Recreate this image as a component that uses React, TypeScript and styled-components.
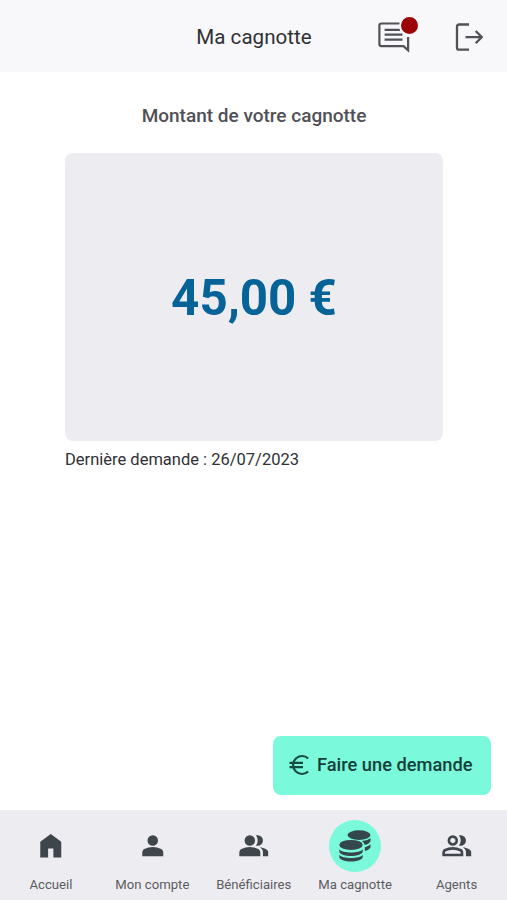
import React from "react";
import styled, { createGlobalStyle } from "styled-components";

const PERSON =
  "M12 12q-1.65 0-2.825-1.175T8 8t1.175-2.825T12 4t2.825 1.175T16 8t-1.175 2.825T12 12m-8 8v-2.8q0-.85.438-1.562T5.6 14.55q1.55-.775 3.15-1.162T12 13t3.25.388 3.15 1.162q.725.375 1.163 1.088T20 17.2V20z";
const GROUP =
  "M1 20v-2.8q0-.85.438-1.562T2.6 14.55q1.55-.775 3.15-1.162T9 13t3.25.388 3.15 1.162q.725.375 1.163 1.088T17 17.2V20zm18 0v-3q0-1.1-.612-2.113T16.65 13.15q1.275.15 2.4.513t2.1.887q.9.5 1.375 1.112T23 17v3zM9 12q-1.65 0-2.825-1.175T5 8t1.175-2.825T9 4t2.825 1.175T13 8t-1.175 2.825T9 12m10-4q0 1.65-1.175 2.825T15 12q-.275 0-.7-.062T13.6 11.8q.675-.8 1.038-1.775T15 8t-.362-2.025T13.6 4.2q.35-.125.7-.163T15 4q1.65 0 2.825 1.175T19 8";
const GROUP_HOLES =
  "M3 18h12v-.8q0-.275-.137-.5t-.363-.35q-1.35-.675-2.725-1.012T9 15t-2.775.338T3.5 16.35q-.225.125-.363.35T3 17.2zm6-8q.825 0 1.413-.587T11 8t-.587-1.412T9 6t-1.412.588T7 8t.588 1.413T9 10";

const Coins = () => (
  <svg width="52" height="52" viewBox="0 0 52 52" fill="#34474c">
    <ellipse cx="30" cy="15.100" rx="11.500" ry="4.800" />
    <path d="M33 20.900Q39 20.400 41.500 18V21.400Q40 24 35.800 25Q35 22.500 33 20.900Z" />
    <path d="M35.800 27.200Q39.800 26.200 41.500 24.200V27.400Q40 30 35.800 31Z" />
    <ellipse cx="22" cy="24.900" rx="11.700" ry="5" />
    <path d="M10.300 29.200C13 33.600 31 33.600 33.700 29.200V32C31 37.400 13 37.400 10.300 32Z" />
    <path d="M10.300 34.700C13 39.100 31 39.100 33.700 34.700V37.500C31 42.900 13 42.900 10.300 37.500Z" />
  </svg>
);

const items = [
  { label: "Accueil", path: "M4 21V9l8-6 8 6v12h-6v-7h-4v7z" },
  { label: "Mon compte", path: PERSON },
  { label: "Bénéficiaires", path: GROUP },
  { label: "Ma cagnotte", active: true },
  { label: "Agents", path: GROUP + "z" + GROUP_HOLES },
];

export default function App() {
  return (
    <Page>
      <GlobalStyle />
      <Header>
        <span />
        <Title>Ma cagnotte</Title>
        <Actions>
          <Messages>
            <svg width="34" height="34" viewBox="0 0 34 34" fill="none" stroke="#505257" strokeWidth="2.200">
              <path d="M24 3.500H5.500Q3.400 3.500 3.400 5.600V24Q3.400 26.100 5.500 26.100H27.500L32.100 30.300V17" />
              <path d="M8.600 9.900H24M8.600 14.700H26.500M8.600 19.700H26.500" />
            </svg>
            <Dot />
          </Messages>
          <svg width="28" height="28" viewBox="0 0 28 28" fill="none" stroke="#505257" strokeWidth="2.300">
            <path d="M14 1.500H4Q2 1.500 2 3.500V24.700Q2 26.700 4 26.700H14" />
            <path d="M10.500 14.100H27M20.700 8L26.800 14.100L20.700 20.200" />
          </svg>
        </Actions>
      </Header>
      <Main>
        <Heading>Montant de votre cagnotte</Heading>
        <Card>
          <Amount>45,00 €</Amount>
        </Card>
        <LastRequest>Dernière demande : 26/07/2023</LastRequest>
      </Main>
      <Footer>
        <RequestButton>
          <svg width="21" height="22" viewBox="0 0 21 22" fill="none" stroke="#174b43" strokeWidth="2.100">
            <path d="M19.200 4.400A9 9 0 1 0 19.200 17.600M.5 8.900H14M.5 13.100H14" />
          </svg>
          <ButtonText>Faire une demande</ButtonText>
        </RequestButton>
      </Footer>
      <Nav>
        {items.map((item) => (
          <NavItem key={item.label}>
            <NavIcon $active={item.active}>
              {item.path ? (
                <svg width="31.500" height="31.500" viewBox="0 0 24 24" fill="#3e464c" fillRule="evenodd">
                  <path d={item.path} />
                </svg>
              ) : (
                <Coins />
              )}
            </NavIcon>
            <NavLabel>{item.label}</NavLabel>
          </NavItem>
        ))}
      </Nav>
    </Page>
  );
}

const GlobalStyle = createGlobalStyle`
  * {
    box-sizing: border-box;
  }
  body {
    margin: 0;
    background: #fff;
    font-family: Roboto, sans-serif;
  }
  svg {
    display: block;
    flex-shrink: 0;
  }
`;

const Page = styled.div`
  width: 100%;
  height: 900px;
  display: flex;
  flex-direction: column;
  overflow: hidden;
`;

const Header = styled.header`
  height: 72px;
  flex-shrink: 0;
  display: grid;
  grid-template-columns: 1fr auto 1fr;
  align-items: center;
  background: #f8f8fb;
`;

const Title = styled.h1`
  margin: 0;
  padding: 2px 0 0 1px;
  font-size: 20.6px;
  line-height: 28px;
  font-weight: 400;
  color: #303034;
`;

const Actions = styled.div`
  display: flex;
  align-items: center;
  justify-content: flex-end;
  gap: 45px;
  padding: 2px 24px 0 0;
`;

const Messages = styled.div`
  position: relative;
`;

const Dot = styled.span`
  position: absolute;
  top: -5px;
  right: -10px;
  width: 21px;
  height: 21px;
  border: 2px solid #f8f8fb;
  border-radius: 50%;
  background: #9c0306;
`;

const Main = styled.main`
  flex: 1;
  padding: 30px 64px 0 65px;
`;

const Heading = styled.h2`
  margin: 0 0 23px;
  font-size: 19px;
  line-height: 28px;
  font-weight: 500;
  text-align: center;
  color: #505056;
`;

const Card = styled.section`
  height: 288px;
  display: flex;
  align-items: center;
  justify-content: center;
  padding-top: 2px;
  border-radius: 8px;
  background: #ededf1;
`;

const Amount = styled.strong`
  font-size: 49.3px;
  line-height: 56px;
  font-weight: 700;
  color: #056398;
`;

const LastRequest = styled.p`
  margin: 7px 0 0;
  font-size: 16.5px;
  line-height: 24px;
  color: #303034;
`;

const Footer = styled.div`
  display: flex;
  justify-content: flex-end;
  padding: 0 16px 15px;
`;

const RequestButton = styled.button`
  width: 218px;
  height: 59px;
  display: flex;
  align-items: center;
  gap: 7px;
  padding: 0 0 2px 16px;
  border: 0;
  border-radius: 8px;
  background: #7afadb;
  font-family: inherit;
`;

const ButtonText = styled.span`
  font-size: 18.25px;
  line-height: 24px;
  font-weight: 500;
  white-space: nowrap;
  color: #153f3a;
`;

const Nav = styled.nav`
  height: 90px;
  flex-shrink: 0;
  display: grid;
  grid-template-columns: repeat(5, 1fr);
  background: #ededf1;
`;

const NavItem = styled.div`
  display: flex;
  flex-direction: column;
  align-items: center;
  padding: 10px 0 0 0.5px;
`;

const NavIcon = styled.div<{ $active?: boolean }>`
  width: 52px;
  height: 52px;
  display: flex;
  align-items: center;
  justify-content: center;
  border-radius: 50%;
  background: ${(props) => (props.$active ? "#7afadb" : "transparent")};
`;

const NavLabel = styled.span`
  margin-top: 5px;
  font-size: 13.15px;
  line-height: 16px;
  white-space: nowrap;
  color: #5c5c61;
`;
